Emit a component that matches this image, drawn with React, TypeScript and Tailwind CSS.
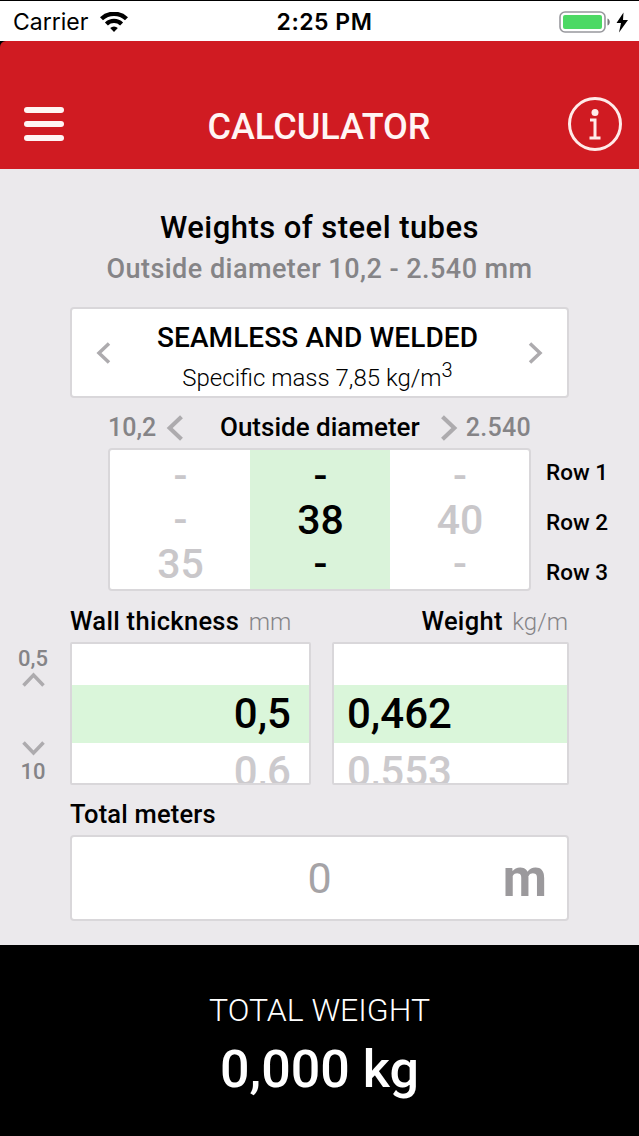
const diameters = [
  { values: ['-', '-', '35'], selected: false },
  { values: ['-', '38', '-'], selected: true },
  { values: ['-', '40', '-'], selected: false },
];

export default function App() {
  return (
    <div className="w-[639px] h-[1136px] flex flex-col overflow-hidden bg-[#ebe9ec] text-black font-['Roboto',sans-serif]">
      <StatusBar />
      <Header />

      <main className="h-[776px] shrink-0 flex flex-col">
        <h2 className="mt-[39px] h-10 text-center text-[31px] leading-10 tracking-[0.45px] font-medium">Weights of steel tubes</h2>
        <p className="h-[42px] text-center text-[27px] leading-[43px] tracking-[0.46px] font-medium text-[#858487]">Outside diameter 10,2 - 2.540 mm</p>

        {/* Tube type selector */}
        <div className="mt-[17px] ml-[70px] w-[499px] h-[91px] shrink-0 flex items-center justify-between bg-white border-2 border-[#d9d7da] rounded-[4px] px-[24px]">
          <Chevron className="w-[15px] h-[22px]" direction="left" />
          <div className="pt-[8px] pr-[4px] text-center">
            <div className="h-[42px] text-[28px] leading-[43px] tracking-[0.1px] font-medium">SEAMLESS AND WELDED</div>
            <div className="h-10 text-[24px] leading-10 font-light">
              Specific mass 7,85 kg/m<span className="relative -top-[9px] text-[20px] leading-none">3</span>
            </div>
          </div>
          <Chevron className="w-[15px] h-[22px]" direction="right" />
        </div>

        <div className="mt-[9px] ml-[108px] w-[423px] h-10 shrink-0 grid grid-cols-[112px_1fr_91px] items-center text-[26px] font-medium">
          <span className="flex items-center pt-px text-[25px] text-[#858487]">
            10,2
            <Chevron className="ml-[10px] w-[18px] h-[26px]" direction="left" />
          </span>
          <span>Outside diameter</span>
          <span className="flex items-center justify-between pt-px text-[25px] text-[#858487]">
            <Chevron className="w-[18px] h-[26px]" direction="right" />
            <span className="tracking-[0.3px]">2.540</span>
          </span>
        </div>

        {/* Diameter picker */}
        <div className="mt-px ml-[108px] h-[143px] shrink-0 flex">
          <div className="w-[423px] h-[143px] grid grid-cols-[140px_140px_1fr] bg-white border-2 border-[#d9d7da] rounded-[4px]">
            {diameters.map((column, i) => (
              <div
                key={i}
                className={`pt-[4px] pl-px text-center text-[41px] leading-[44px] font-medium ${column.selected ? 'bg-[#daf3da]' : 'text-[#c9c7ca]'}`}
              >
                {column.values.map((value, row) => (
                  <div key={row} className="h-11">{value}</div>
                ))}
              </div>
            ))}
          </div>
          <div className="-mt-px ml-[15px] text-[22.5px] leading-[50px] font-medium">
            <div>Row 1</div>
            <div>Row 2</div>
            <div>Row 3</div>
          </div>
        </div>

        <div className="mt-[5px] ml-[70px] w-[498px] h-[50px] shrink-0 flex justify-between text-[25.5px] leading-[50px] tracking-[0.3px] font-medium">
          <span>Wall thickness <Unit>mm</Unit></span>
          <span>Weight <Unit>kg/m</Unit></span>
        </div>

        {/* Thickness and weight wheels */}
        <div className="h-[143px] -mt-[4px] flex shrink-0">
          <div className="w-[70px] pt-px pr-[4px] flex flex-col items-center text-[22px] font-medium leading-8 text-[#858487]">
            <div>0,5</div>
            <Chevron className="-mt-[3px] w-[23px] h-[16px]" direction="up" />
            <Chevron className="mt-[52px] w-[23px] h-[16px]" direction="down" />
            <div>10</div>
          </div>
          <Wheel value="0,5" next="0,6" className="w-[241px] text-right" padding="pr-[18px]" />
          <Wheel value="0,462" next="0,553" className="ml-[21px] w-[237px]" padding="pl-[13px]" />
        </div>

        <div className="mt-[9px] ml-[70px] h-10 shrink-0 text-[25.5px] leading-10 tracking-[0.2px] font-medium">Total meters</div>
        <div className="mt-px ml-[70px] w-[499px] h-[86px] shrink-0 grid grid-cols-3 bg-white border-2 border-[#d9d7da] rounded-[4px]">
          <span className="col-start-2 text-center text-[43px] leading-[83px] text-[#a5a3a6]">0</span>
          <span className="pr-[20px] text-right text-[51px] leading-[84px] font-bold text-[#9b999c]">m</span>
        </div>
      </main>

      <footer className="flex-1 bg-black text-white text-center pt-[41px]">
        <div className="h-12 text-[32px] leading-12 font-light">TOTAL WEIGHT</div>
        <div className="h-[70px] text-[52px] leading-[72px] font-medium">0,000 kg</div>
      </footer>
    </div>
  );
}

const StatusBar = () => (
  <div className="h-[41px] shrink-0 grid grid-cols-3 items-center bg-white border-t border-black font-['Inter',sans-serif] text-[23px] leading-10">
    <div className="flex items-center pl-[13px] pt-px">
      <span>Carrier</span>
      <svg width="28" height="20" viewBox="0 0 28 20" className="ml-[12px]" fill="none" stroke="#000" strokeWidth="4.3">
        <path d="M1.5 6.800a18 18 0 0 1 25 0" />
        <path d="M6.400 12a11 11 0 0 1 15.200 0" />
        <path d="M14 20l-3.800-3.900a5.500 5.500 0 0 1 7.600 0z" fill="#000" stroke="none" />
      </svg>
    </div>
    <div className="text-center pl-[10px] pt-px font-semibold tracking-[0.5px] whitespace-nowrap">2:25 PM</div>
    <div className="flex items-center justify-end pr-[10px]">
      <svg width="70" height="24" viewBox="0 0 70 24">
        <rect x="1" y="2" width="45" height="20" rx="5" fill="#fff" stroke="#98989d" strokeWidth="1.6" />
        <rect x="4" y="5" width="39" height="14" rx="2" fill="#4cd964" />
        <path d="M48.500 8.500c3 1 3 6 0 7z" fill="#77777b" />
        <path d="M64.500 2.500 57.500 13h4.500l-2 9.500 9-12.500h-5z" fill="#000" />
      </svg>
    </div>
  </div>
);

const Header = () => (
  <header className="h-32 shrink-0 bg-black">
    <div className="h-full pt-[55px] pl-6 pr-[17px] grid grid-cols-[54px_1fr_54px] items-start bg-[#d01b22] rounded-tl-[6px]">
      <div className="mt-[11px] w-10 flex flex-col gap-2">
        <div className="h-[6px] rounded-[3px] bg-[#fff5f4]" />
        <div className="h-[6px] rounded-[3px] bg-[#fff5f4]" />
        <div className="h-[6px] rounded-[3px] bg-[#fff5f4]" />
      </div>
      <h1 className="h-[60px] pr-2 text-center text-[36px] leading-[62px] font-medium text-[#fff5f4]">CALCULATOR</h1>
      <svg width="54" height="56" viewBox="0 0 54 56" fill="none" stroke="#ffebe9">
        <circle cx="27" cy="28" r="25.500" strokeWidth="3" />
        <circle cx="27" cy="16.500" r="3.500" fill="#ffebe9" stroke="none" />
        <path d="M22 24h5v18M21.500 42h11" strokeWidth="3" />
      </svg>
    </div>
  </header>
);

const arrows = {
  left: { viewBox: '0 0 15 22', d: 'M13 1.500 3 11l10 9.500' },
  right: { viewBox: '0 0 15 22', d: 'm2 1.500 10 9.500-10 9.500' },
  up: { viewBox: '0 0 23 16', d: 'M1.500 13.500 11.500 3l10 10.500' },
  down: { viewBox: '0 0 23 16', d: 'm1.500 2.500 10 10.500 10-10.500' },
};

const Chevron = ({ direction, className }: { direction: keyof typeof arrows, className: string }) => (
  <svg viewBox={arrows[direction].viewBox} className={`shrink-0 ${className}`} fill="none" stroke="#adabae" strokeWidth="3.5">
    <path d={arrows[direction].d} />
  </svg>
);

const Unit = ({ children }: { children: React.ReactNode }) => (
  <span className="ml-[3px] text-[24px] tracking-normal font-light text-[#858487]">{children}</span>
);

const Wheel = ({ value, next, className, padding }: { value: string, next: string, className: string, padding: string }) => (
  <div className={`h-[143px] overflow-hidden bg-white border-2 border-[#d9d7da] rounded-[2px] pt-[41px] text-[42px] leading-[58px] font-medium ${className}`}>
    <div className={`h-[58px] bg-[#daf6da] ${padding}`}>{value}</div>
    <div className={`h-[58px] text-[#cccacd] ${padding}`}>{next}</div>
  </div>
);
